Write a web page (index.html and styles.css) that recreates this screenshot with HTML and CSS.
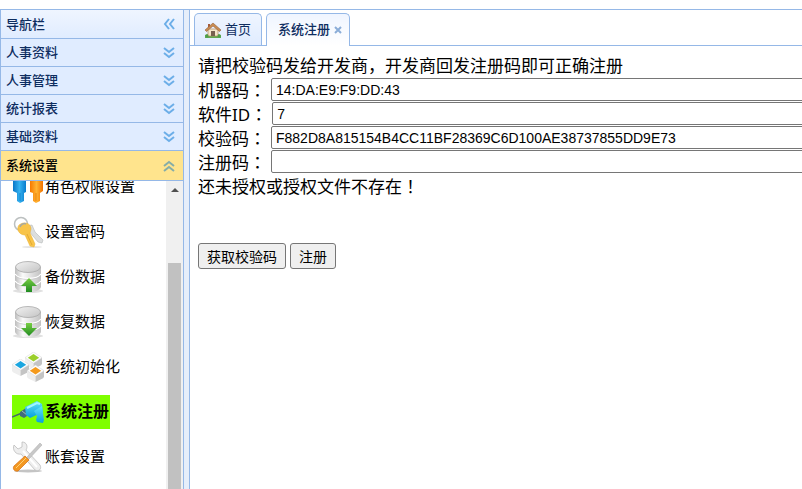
FILE: index.html
```html
<!DOCTYPE html>
<html lang="zh-CN">
<head>
<meta charset="utf-8">
<meta name="viewport" content="width=device-width, initial-scale=1">
<title>系统注册</title>
<link rel="stylesheet" href="styles.css">
</head>
<body>
<svg class="defs" aria-hidden="true">
  <defs>
    <linearGradient id="silver"><stop offset="0" stop-color="#bdbdbd"/><stop offset=".3" stop-color="#fafafa"/><stop offset=".65" stop-color="#dedede"/><stop offset="1" stop-color="#c2c2c2"/></linearGradient>
    <linearGradient id="lid" x2="1" y2="1"><stop offset="0" stop-color="#f2f2f2"/><stop offset="1" stop-color="#c4c4c4"/></linearGradient>
    <linearGradient id="green" x2="0" y2="1"><stop offset="0" stop-color="#79cf43"/><stop offset="1" stop-color="#208b22"/></linearGradient>
    <linearGradient id="blue"><stop offset="0" stop-color="#0876c8"/><stop offset=".5" stop-color="#35b2f0"/><stop offset="1" stop-color="#087bcd"/></linearGradient>
    <linearGradient id="orange"><stop offset="0" stop-color="#f77900"/><stop offset=".5" stop-color="#ffb332"/><stop offset="1" stop-color="#f27300"/></linearGradient>
    <linearGradient id="cyan" x2="0" y2="1"><stop offset="0" stop-color="#62e3fa"/><stop offset="1" stop-color="#07a0dc"/></linearGradient>
    <symbol id="down" viewBox="0 0 12 12"><path d="M1 1l5 4 5-4M1 6l5 4 5-4" fill="none" stroke="currentColor" stroke-width="2"/></symbol>
    <symbol id="database" viewBox="0 0 32 32">
      <ellipse cx="16" cy="30" rx="15" ry="2" fill="#e0e0e0"/>
      <path d="M3 6v20c2 7 24 7 26 0V6z" fill="url(#silver)"/>
      <path d="M3 13c3 6 23 6 26 0M3 20c3 6 23 6 26 0" fill="none" stroke="#fff" stroke-width="1.5"/>
      <path d="M3 14c3 6 23 6 26 0M3 21c3 6 23 6 26 0" fill="none" stroke="#bdbdbd" stroke-width=".6"/>
      <ellipse cx="16" cy="6" rx="12.500" ry="5.500" fill="url(#lid)" stroke="#a8a8a8" stroke-width=".8"/>
    </symbol>
    <symbol id="cube" viewBox="0 0 18 18">
      <path d="M0 6v6q0 1 1 2l8 4V10z" fill="#eee"/>
      <path d="M18 6v6q0 1-1 2l-8 4V10z" fill="#c4c4c4"/>
      <path d="M9 0l9 6-9 6-9-6z" fill="#fdfdfd" stroke="#d2d2d2" stroke-width=".5"/>
      <path d="M9 2l6 4-6 4-6-4z" fill="currentColor"/>
    </symbol>
  </defs>
</svg>
<div class="app">
  <aside class="sidebar">
    <div class="head head-title"><span>导航栏</span><button class="tool" aria-label="收起导航栏"><svg viewBox="0 0 12 12"><path d="M6 1L2 6l4 5M11 1L7 6l4 5" fill="none" stroke="currentColor" stroke-width="2"/></svg></button></div>
    <div class="head"><span>人事资料</span><button class="tool" aria-label="展开人事资料"><svg><use href="#down"/></svg></button></div>
    <div class="head"><span>人事管理</span><button class="tool" aria-label="展开人事管理"><svg><use href="#down"/></svg></button></div>
    <div class="head"><span>统计报表</span><button class="tool" aria-label="展开统计报表"><svg><use href="#down"/></svg></button></div>
    <div class="head"><span>基础资料</span><button class="tool" aria-label="展开基础资料"><svg><use href="#down"/></svg></button></div>
    <div class="head head-open"><span>系统设置</span><button class="tool" aria-label="收起系统设置"><svg viewBox="0 0 12 12"><path d="M1 6l5-4 5 4M1 11l5-4 5 4" fill="none" stroke="currentColor" stroke-width="2"/></svg></button></div>
    <div class="panel">
      <nav class="menu">
        <a href="#roles"><svg viewBox="0 0 32 32"><circle cx="8" cy="4" r="4" fill="url(#blue)"/><path d="M1 10l4-3h6l3 3v11l-2 1v8l-4 2-3-2v-8l-4-2z" fill="url(#blue)"/><path d="M8 22v8" stroke="#0871bf" stroke-width=".7"/><circle cx="24" cy="4" r="4" fill="url(#orange)"/><path d="M18 10l3-3h6l4 3v10l-3 2v8l-4 2-3-2v-8l-3-1z" fill="url(#orange)"/><path d="M24 22v8" stroke="#df7000" stroke-width=".7"/></svg><span>角色权限设置</span></a>
        <a href="#password"><svg viewBox="0 0 32 32"><ellipse cx="20" cy="31" rx="10" ry="1" fill="#e4e4e4"/><path d="M14 10l6-1 3 7 8 8-1 3-4-1-10-12z" fill="#dcdede" stroke="#b5b8b8" stroke-width=".6"/><circle cx="9" cy="8" r="6.500" fill="none" stroke="#bcc0c0" stroke-width="1.500"/><path d="M7 9c5-4 12-2 12 4l-1 4 5 11-1 3-4-1-5-11c-6 0-9-6-6-10z" fill="#f8c449" stroke="#eab12f" stroke-width=".5"/><path d="M15 18l5 11" stroke="#e2a936" stroke-width="1"/><path d="M8 11c1-3 4-4 6-3" stroke="#a7a9a2" stroke-width="1.500" fill="none"/></svg><span>设置密码</span></a>
        <a href="#backup"><svg viewBox="0 0 32 32"><use href="#database"/><path d="M17 17l8 8h-5v6h-6v-6H9z" fill="url(#green)"/></svg><span>备份数据</span></a>
        <a href="#restore"><svg viewBox="0 0 32 32"><use href="#database"/><path d="M14 17h6v5h5l-8 8-8-8h5z" fill="url(#green)"/></svg><span>恢复数据</span></a>
        <a href="#init"><svg viewBox="0 0 32 32"><use href="#cube" x="13" y="1" width="17" height="17" color="#9bcf2b"/><use href="#cube" x="0" y="8" width="17" height="17" color="#1ba6e0"/><use href="#cube" x="15" y="14" width="17" height="17" color="#f59a1c"/></svg><span>系统初始化</span></a>
        <a href="#register" class="current" aria-current="page"><svg viewBox="0 0 32 32"><path d="M0 21l10-4" stroke="#456b68" stroke-width="1.500"/><path d="M8 16l6-4 4 6-6 4-4-2z" fill="#416b7c"/><path d="M10 15l5 4" stroke="#a3b8bd"/><path d="M13 11l12-6 5 3 1 8-13 6-4-3z" fill="url(#cyan)"/><path d="M22 15l8-5 2 14-1 3-6-1-1-2 1-4z" fill="url(#cyan)"/><path d="M15 12l10-5 3 1" stroke="#a1f6ff" stroke-width="2" fill="none"/></svg><span>系统注册</span></a>
        <a href="#books"><svg viewBox="0 0 32 32"><ellipse cx="16" cy="30" rx="14" ry="1.500" fill="#c4c4c4"/><path d="M2 4l4 4 4-2V1c5 0 6 5 4 8l14 15c2 4-1 7-5 5L9 13c-5 1-9-4-7-9z" fill="#eee" stroke="#bcbcbc" stroke-width=".8"/><path d="M11 10l14 16" stroke="#fff" stroke-width="2"/><path d="M28 2l2 2-13 14-2-2z" fill="#c8c8c8" stroke="#aaa" stroke-width=".5"/><path d="M13 15l4 4L6 30c-3 1-6-2-4-5z" fill="#f39821" stroke="#d66d10" stroke-width=".7"/><path d="M14 17L4 27" stroke="#ffd078"/></svg><span>账套设置</span></a>
      </nav>
      <div class="scrollbar" aria-hidden="true"><svg viewBox="0 0 8 4"><path d="M0 4l4-4 4 4z" fill="#505050"/></svg><div class="thumb"></div></div>
    </div>
  </aside>
  <main class="center">
    <div class="tabs" role="tablist">
      <div class="tab"><svg class="home" viewBox="0 0 16 16"><path d="M0 13c3-2 13-2 16 0v3H0z" fill="#61aa51"/><path d="M3 7h10v7H3z" fill="#f4e6ca" stroke="#b48b60" stroke-width=".7"/><path d="M3 2h2v4H3z" fill="#a45b3b"/><path d="M0 8l8-7 8 7-1.500 1.500L8 4 1.500 9.500z" fill="#c98c52" stroke="#956038" stroke-width=".6"/><path d="M6 9h4v5H6z" fill="#78604f"/><circle cx="2" cy="14" r="1.500" fill="#4e9d4b"/><circle cx="14" cy="14" r="1.500" fill="#4e9d4b"/></svg><button role="tab" aria-selected="false">首页</button></div>
      <div class="tab tab-selected"><button role="tab" aria-selected="true">系统注册</button><button class="close" aria-label="关闭"><svg viewBox="0 0 8 8"><path d="M1 1l6 6M7 1L1 7" stroke="currentColor" stroke-width="2"/></svg></button></div>
    </div>
    <form class="content">
      <p>请把校验码发给开发商，开发商回发注册码即可正确注册</p>
      <div class="row"><label for="machine">机器码<span class="mark" lang="zh-TW">：</span></label><input id="machine" type="text" value="14:DA:E9:F9:DD:43"></div>
      <div class="row"><label for="software">软件ID<span class="mark" lang="zh-TW">：</span></label><input id="software" type="text" value="7"></div>
      <div class="row"><label for="check">校验码<span class="mark" lang="zh-TW">：</span></label><input id="check" type="text" value="F882D8A815154B4CC11BF28369C6D100AE38737855DD9E73"></div>
      <div class="row"><label for="regcode">注册码<span class="mark" lang="zh-TW">：</span></label><input id="regcode" type="text"></div>
      <p>还未授权或授权文件不存在<span class="mark" lang="zh-TW">！</span></p>
      <div class="actions"><button type="button">获取校验码</button><button type="button">注册</button></div>
    </form>
  </main>
</div>
</body>
</html>
```
FILE: styles.css
```css
* { box-sizing: border-box; }
body {
  margin: 0;
  background: #fff;
  color: #000;
  font-family: "Noto Sans", "Noto Sans CJK SC", sans-serif;
}
button { font-family: inherit; }
.defs { position: absolute; width: 0; height: 0; }
.app {
  display: flex;
  gap: 5px;
  height: 100vh;
  padding-top: 9px;
  overflow: hidden;
  background: linear-gradient(#fff 9px, #95b8e7 9px, #95b8e7 10px, #e6eefa 10px);
}
.sidebar {
  display: flex;
  flex-direction: column;
  flex: none;
  width: 184px;
  border: 1px solid #95b8e7;
  border-bottom: 0;
  background: #fff;
}
.head {
  display: flex;
  flex: none;
  align-items: center;
  justify-content: space-between;
  height: 28px;
  padding: 0 8px 0 5px;
  border-bottom: 1px solid #95b8e7;
  background: #e0ecff;
  color: #0e2d5f;
  font-size: 13px;
  font-weight: 500;
}
.head span { padding-bottom: 2px; }
.head-title { height: 29px; background: linear-gradient(#eff5ff, #e0ecff); }
.head-open { height: 30px; background: #ffe48d; color: #000; }
.tool {
  display: flex;
  padding: 0;
  border: 0;
  background: none;
  color: #6caee8;
}
.tool svg { width: 12px; height: 12px; }
.head-open .tool { color: #85ada8; }
.panel { display: flex; flex: 1; min-height: 0; overflow: hidden; }
.menu {
  display: flex;
  flex: 1;
  flex-direction: column;
  align-items: flex-start;
  gap: 11px;
  margin-top: -11px;
  padding-left: 11px;
}
.menu a {
  display: flex;
  flex: none;
  align-items: center;
  gap: 1px;
  height: 34px;
  padding-right: 1px;
  color: #000;
  font-size: 15px;
  text-decoration: none;
  white-space: nowrap;
}
.menu svg { flex: none; width: 32px; height: 32px; }
.menu span { padding-bottom: 4px; }
.menu .current { background: #7fff00; font-size: 16px; font-weight: 700; }
.scrollbar {
  display: flex;
  flex: none;
  flex-direction: column;
  align-items: center;
  gap: 71px;
  width: 17px;
  padding-top: 7px;
  background: #f0f0f0;
}
.scrollbar svg { flex: none; width: 8px; height: 4px; }
.thumb { flex: 1; width: 13px; background: #c1c1c1; }
.center {
  flex: 1;
  min-width: 0;
  overflow: hidden;
  border: solid #95b8e7;
  border-width: 1px 0 0 1px;
  background: #fff;
}
.tabs {
  display: flex;
  gap: 4px;
  height: 36px;
  padding: 3px 4px 0;
  border-bottom: 1px solid #95b8e7;
}
.tab {
  display: flex;
  align-items: center;
  gap: 4px;
  height: 32px;
  padding: 0 10px;
  border: 1px solid #95b8e7;
  border-bottom: 0;
  border-radius: 5px 5px 0 0;
  background: linear-gradient(#eff5ff, #e0ecff);
}
.tab button {
  padding: 0 0 2px;
  border: 0;
  background: none;
  color: #0e2d5f;
  font-size: 13px;
}
.tab-selected {
  height: 33px;
  padding: 0 7px 0 11px;
  background: linear-gradient(#eff5ff, #fff);
}
.tab-selected button { padding-bottom: 4px; font-weight: 500; }
.home { width: 16px; height: 16px; }
.tab .close { display: flex; padding: 0; color: #8badd8; }
.close svg { width: 8px; height: 8px; }
.content { padding: 8px; font-size: 17px; line-height: 24px; }
.content p { margin: 0; white-space: nowrap; }
.mark { font-family: "Noto Sans CJK TC", sans-serif; }
.row { display: flex; gap: 5px; height: 24px; }
.row label { flex: none; line-height: 23px; white-space: nowrap; }
.row input {
  flex: none;
  width: 100%;
  height: 23px;
  padding: 0 4px;
  border: 1px solid #767676;
  border-radius: 2px;
  background: #fff;
  color: #000;
  font-family: "Liberation Sans", sans-serif;
  font-size: 14px;
}
.actions { display: flex; gap: 4px; padding-top: 44px; }
.actions button {
  height: 26px;
  padding: 0 8px;
  border: 1px solid #767676;
  border-radius: 3px;
  background: #efefef;
  color: #000;
  font-size: 14px;
}
```
